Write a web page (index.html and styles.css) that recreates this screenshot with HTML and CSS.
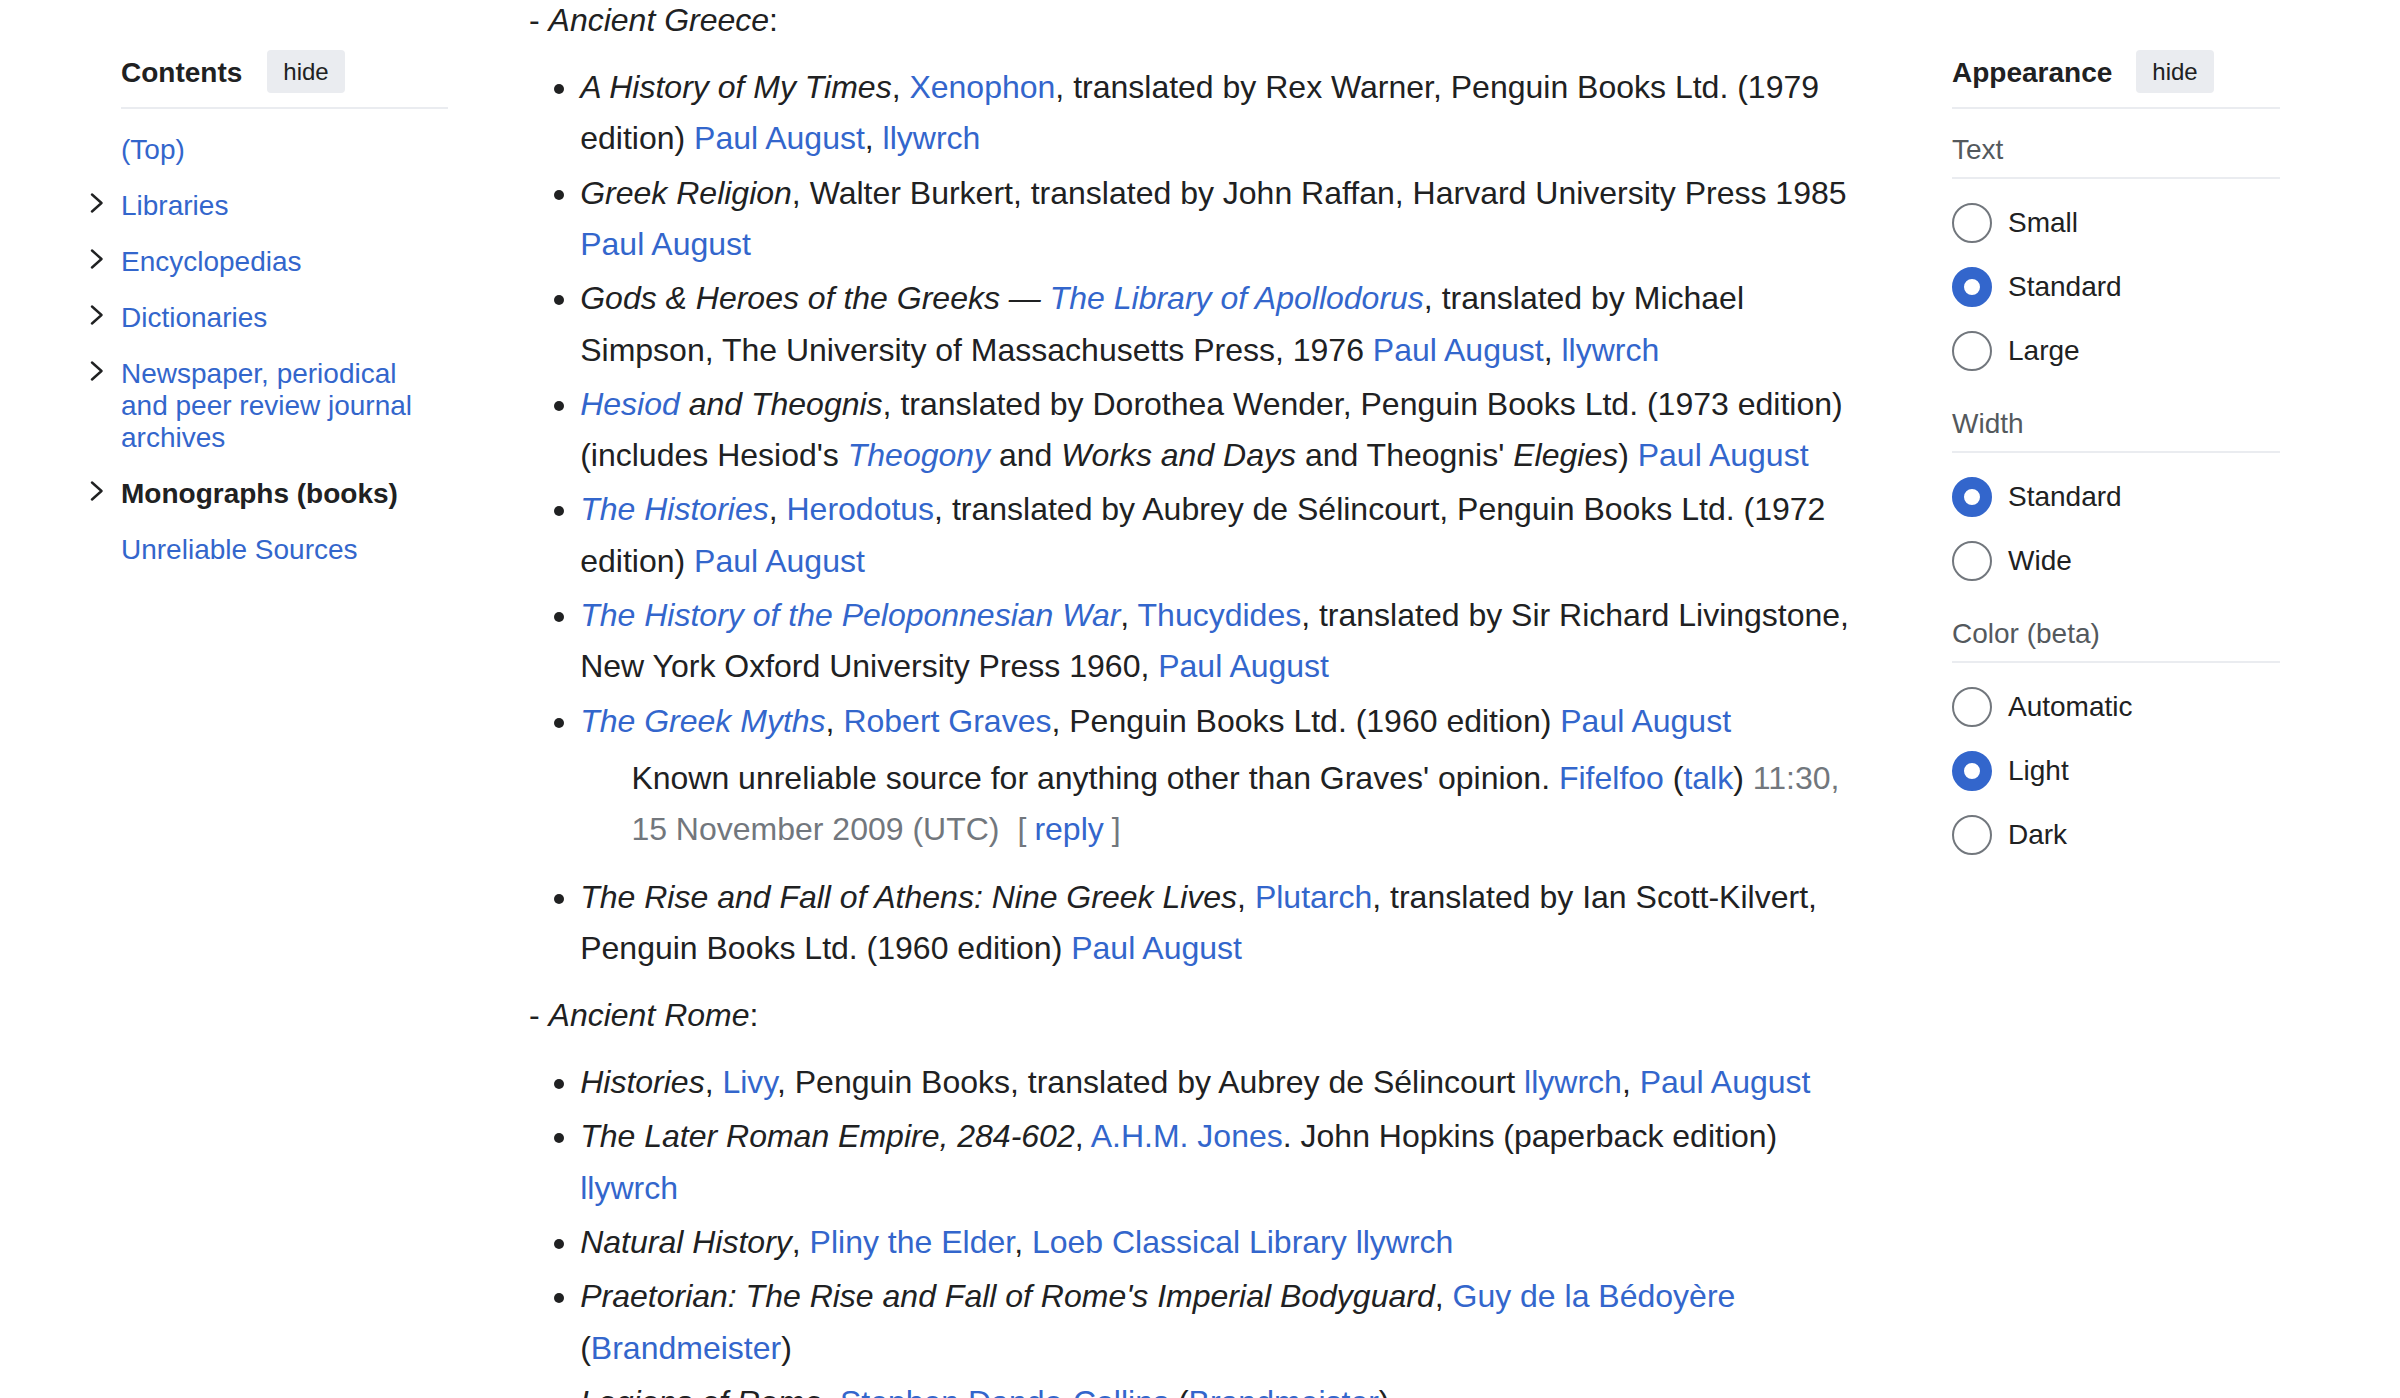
FILE: index.html
```html
<!DOCTYPE html>
<html lang="en">
<head>
<meta charset="utf-8">
<title>Monographs (books)</title>
<link rel="stylesheet" href="styles.css">
</head>
<body>
<div class="page">
  <nav class="toc">
    <div class="panel-head">
      <h2 class="panel-title">Contents</h2>
      <span class="hide-btn">hide</span>
    </div>
    <ul class="toc-list">
      <li class="toc-item"><a href="#">(Top)</a></li>
      <li class="toc-item"><span class="toggle"><svg class="chev" width="14" height="20" viewBox="0 0 14 20"><polyline points="2,1.5 11.5,10 2,18.5"/></svg></span><a href="#">Libraries</a></li>
      <li class="toc-item"><span class="toggle"><svg class="chev" width="14" height="20" viewBox="0 0 14 20"><polyline points="2,1.5 11.5,10 2,18.5"/></svg></span><a href="#">Encyclopedias</a></li>
      <li class="toc-item"><span class="toggle"><svg class="chev" width="14" height="20" viewBox="0 0 14 20"><polyline points="2,1.5 11.5,10 2,18.5"/></svg></span><a href="#">Dictionaries</a></li>
      <li class="toc-item"><span class="toggle"><svg class="chev" width="14" height="20" viewBox="0 0 14 20"><polyline points="2,1.5 11.5,10 2,18.5"/></svg></span><a href="#">Newspaper, periodical and peer review journal archives</a></li>
      <li class="toc-item"><span class="toggle"><svg class="chev" width="14" height="20" viewBox="0 0 14 20"><polyline points="2,1.5 11.5,10 2,18.5"/></svg></span><a href="#" class="active">Monographs (books)</a></li>
      <li class="toc-item"><a href="#">Unreliable Sources</a></li>
    </ul>
  </nav>

  <main class="content">
    <p>- <i>Ancient Greece</i>:</p>
    <ul>
      <li><i>A History of My Times</i>, <a href="#">Xenophon</a>, translated by Rex Warner, Penguin Books Ltd. (1979 edition) <a href="#">Paul August</a>, <a href="#">llywrch</a></li>
      <li><i>Greek Religion</i>, Walter Burkert, translated by John Raffan, Harvard University Press 1985 <a href="#">Paul August</a></li>
      <li><i>Gods &amp; Heroes of the Greeks — <a href="#">The Library of Apollodorus</a></i>, translated by Michael Simpson, The University of Massachusetts Press, 1976 <a href="#">Paul August</a>, <a href="#">llywrch</a></li>
      <li><i><a href="#">Hesiod</a> and Theognis</i>, translated by Dorothea Wender, Penguin Books Ltd. (1973 edition) (includes Hesiod's <i><a href="#">Theogony</a></i> and <i>Works and Days</i> and Theognis' <i>Elegies</i>) <a href="#">Paul August</a></li>
      <li><i><a href="#">The Histories</a></i>, <a href="#">Herodotus</a>, translated by Aubrey de Sélincourt, Penguin Books Ltd. (1972 edition) <a href="#">Paul August</a></li>
      <li><i><a href="#">The History of the Peloponnesian War</a></i>, <a href="#">Thucydides</a>, translated by Sir Richard Livingstone, New York Oxford University Press 1960, <a href="#">Paul August</a></li>
      <li><i><a href="#">The Greek Myths</a></i>, <a href="#">Robert Graves</a>, Penguin Books Ltd. (1960 edition) <a href="#">Paul August</a>
        <dl><dd>Known unreliable source for anything other than Graves' opinion. <a href="#">Fifelfoo</a> (<a href="#">talk</a>) <span class="stamp">11:30, 15 November 2009 (UTC)</span><span class="reply-btns"><span class="br br-open">[</span><a href="#" class="reply">reply</a><span class="br br-close">]</span></span></dd></dl>
      </li>
      <li><i>The Rise and Fall of Athens: Nine Greek Lives</i>, <a href="#">Plutarch</a>, translated by Ian Scott-Kilvert, Penguin Books Ltd. (1960 edition) <a href="#">Paul August</a></li>
    </ul>
    <p>- <i>Ancient Rome</i>:</p>
    <ul>
      <li><i>Histories</i>, <a href="#">Livy</a>, Penguin Books, translated by Aubrey de Sélincourt <a href="#">llywrch</a>, <a href="#">Paul August</a></li>
      <li><i>The Later Roman Empire, 284-602</i>, <a href="#">A.H.M. Jones</a>. John Hopkins (paperback edition) <a href="#">llywrch</a></li>
      <li><i>Natural History</i>, <a href="#">Pliny the Elder</a>, <a href="#">Loeb Classical Library</a> <a href="#">llywrch</a></li>
      <li><i>Praetorian: The Rise and Fall of Rome's Imperial Bodyguard</i>, <a href="#">Guy de la Bédoyère</a> (<a href="#">Brandmeister</a>)</li>
      <li><i>Legions of Rome</i>, <a href="#">Stephen Dando-Collins</a> (<a href="#">Brandmeister</a>)</li>
    </ul>
  </main>

  <aside class="appearance">
    <div class="panel-head panel-head-ap">
      <h2 class="panel-title">Appearance</h2>
      <span class="hide-btn">hide</span>
    </div>
    <div class="ap-label">Text</div>
    <ul class="ap-options">
      <li class="ap-opt"><span class="radio"></span>Small</li>
      <li class="ap-opt"><span class="radio checked"></span>Standard</li>
      <li class="ap-opt"><span class="radio"></span>Large</li>
    </ul>
    <div class="ap-label">Width</div>
    <ul class="ap-options">
      <li class="ap-opt"><span class="radio checked"></span>Standard</li>
      <li class="ap-opt"><span class="radio"></span>Wide</li>
    </ul>
    <div class="ap-label">Color (beta)</div>
    <ul class="ap-options">
      <li class="ap-opt"><span class="radio"></span>Automatic</li>
      <li class="ap-opt"><span class="radio checked"></span>Light</li>
      <li class="ap-opt"><span class="radio"></span>Dark</li>
    </ul>
  </aside>
</div>
</body>
</html>
```

FILE: styles.css
```css
html {
  overflow: hidden;
}

body {
  margin: 0;
  background: #ffffff;
  color: #202122;
  font-family: "Liberation Sans", Arial, Helvetica, sans-serif;
}

a {
  color: #3366cc;
  text-decoration: none;
}

.page {
  display: flex;
  align-items: flex-start;
  column-gap: 81px;
  padding: 0 120px 0 121px;
}

/* ---------- side panels ---------- */
.toc {
  flex: none;
  width: 327px;
  padding-top: 50px;
}

.appearance {
  flex: none;
  width: 328px;
  padding-top: 50px;
}

.panel-head {
  display: flex;
  align-items: center;
  column-gap: 25px;
  height: 43px;
  padding-bottom: 14px;
  border-bottom: 2px solid #eaecf0;
}

.panel-head-ap {
  column-gap: 24px;
}

.panel-title {
  margin: 0;
  padding-top: 2px;
  font-size: 28px;
  font-weight: bold;
  line-height: 36px;
  color: #202122;
}

.hide-btn {
  display: flex;
  align-items: center;
  height: 43px;
  padding: 0 16px;
  box-sizing: border-box;
  background: #eaecf0;
  border-radius: 4px;
  font-size: 24px;
  color: #202122;
}

.toc-list {
  list-style: none;
  margin: 12.5px 0 0;
  padding: 0;
}

.toc-item {
  display: flex;
  align-items: flex-start;
  padding: 12px 0;
  font-size: 28px;
  line-height: 32px;
}

.toggle {
  flex: none;
  display: flex;
  width: 33px;
  margin-left: -33px;
  padding-top: 3px;
  box-sizing: border-box;
  padding-left: 2px;
}

.chev {
  display: block;
  fill: none;
  stroke: #202122;
  stroke-width: 2.4;
  stroke-linecap: round;
  stroke-linejoin: round;
}

.toc-item a.active {
  color: #202122;
  font-weight: bold;
}

/* ---------- main content ---------- */
.content {
  flex: 1 1 auto;
  min-width: 0;
  margin-top: -5px;
  font-size: 32px;
  line-height: 1.6;
}

.content p {
  margin: 16px 0;
}

.content p:first-child {
  margin-top: 0;
}

.content ul {
  margin: 9.6px 0 0 51.2px;
  padding: 0;
  list-style-type: disc;
}

.content li {
  margin-bottom: 3.2px;
}

.content dl {
  margin: 6.4px 0 16px;
}

.content dd {
  margin-left: 51.2px;
}

.stamp {
  color: #72777d;
}

.reply-btns {
  margin-left: 18px;
  color: #72777d;
}

.br-open {
  margin-right: 8px;
}

.br-close {
  margin-left: 8px;
}

/* ---------- appearance ---------- */
.ap-label {
  padding: 22.5px 0 9.5px;
  font-size: 28px;
  line-height: 36px;
  color: #54595d;
  border-bottom: 2px solid #eaecf0;
}

.ap-options {
  list-style: none;
  margin: 0;
  padding: 12px 0 0;
}

.ap-opt {
  display: flex;
  align-items: center;
  column-gap: 16px;
  height: 64px;
  font-size: 28px;
  color: #202122;
}

.radio {
  flex: none;
  width: 40px;
  height: 40px;
  box-sizing: border-box;
  border: 2px solid #72777d;
  border-radius: 50%;
  background: #ffffff;
}

.radio.checked {
  border: 12px solid #3366cc;
}
```
